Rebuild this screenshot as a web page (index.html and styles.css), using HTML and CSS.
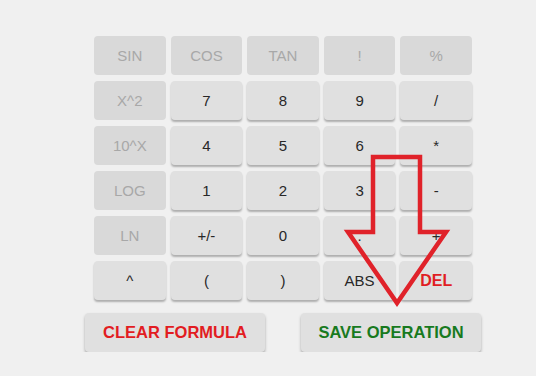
FILE: index.html
```html
<!DOCTYPE html>
<html lang="en">

<head>
    <meta charset="UTF-8">
    <meta name="viewport" content="width=device-width, initial-scale=1.0">
    <title>Calculator</title>
    <link rel="stylesheet" href="styles.css">
</head>

<body>
    <div class="calc">
        <div class="keys">
            <div class="key off">SIN</div>
            <div class="key off">COS</div>
            <div class="key off">TAN</div>
            <div class="key off">!</div>
            <div class="key off">%</div>

            <div class="key off">X^2</div>
            <div class="key">7</div>
            <div class="key">8</div>
            <div class="key">9</div>
            <div class="key">/</div>

            <div class="key off">10^X</div>
            <div class="key">4</div>
            <div class="key">5</div>
            <div class="key">6</div>
            <div class="key">*</div>

            <div class="key off">LOG</div>
            <div class="key">1</div>
            <div class="key">2</div>
            <div class="key">3</div>
            <div class="key">-</div>

            <div class="key off">LN</div>
            <div class="key">+/-</div>
            <div class="key">0</div>
            <div class="key">.</div>
            <div class="key">+</div>

            <div class="key">^</div>
            <div class="key">(</div>
            <div class="key">)</div>
            <div class="key">ABS</div>
            <div class="key del">DEL</div>
        </div>
        <div class="actions">
            <div class="action clear">CLEAR FORMULA</div>
            <div class="action save">SAVE OPERATION</div>
        </div>
    </div>
    <svg class="arrow" width="536" height="376" viewBox="0 0 536 376">
        <polygon points="373,157 420,157 420,232 446,232 397,303 348,232 373,232"
            fill="none" stroke="#e0222a" stroke-width="4.5" stroke-linejoin="miter" />
    </svg>
</body>

</html>
```

FILE: styles.css
```css
* {
    margin: 0;
    padding: 0;
    box-sizing: border-box;
}

body {
    background-color: rgb(240, 240, 240);
    font-family: "Liberation Sans", Arial, sans-serif;
    overflow: hidden;
}

.calc {
    padding-top: 36px;
}

.keys {
    display: grid;
    grid-template-columns: repeat(5, 1fr);
    grid-auto-rows: 39px;
    gap: 6px 5px;
    width: 378px;
    margin-left: 94px;
}

.key {
    display: flex;
    align-items: center;
    justify-content: center;
    background-color: rgb(224, 224, 224);
    border-radius: 4px;
    box-shadow: 0 2px 2px rgba(0, 0, 0, 0.28);
    color: rgb(40, 40, 40);
    font-size: 15px;
}

.key.off {
    background-color: rgb(217, 217, 217);
    box-shadow: none;
    color: rgb(168, 168, 168);
}

.key.del {
    color: rgb(224, 30, 36);
    font-weight: bold;
    font-size: 16px;
}

.actions {
    display: flex;
    justify-content: space-between;
    width: 396px;
    margin: 13px 0 0 85px;
}

.action {
    display: flex;
    align-items: center;
    justify-content: center;
    width: 180px;
    height: 39px;
    background-color: rgb(224, 224, 224);
    border-radius: 4px;
    box-shadow: 0 2px 3px rgba(0, 0, 0, 0.3);
    font-size: 16.5px;
    font-weight: bold;
}

.clear {
    color: rgb(226, 28, 34);
}

.save {
    color: rgb(24, 122, 30);
}

.arrow {
    position: absolute;
    left: 0;
    top: 0;
    pointer-events: none;
}
```
